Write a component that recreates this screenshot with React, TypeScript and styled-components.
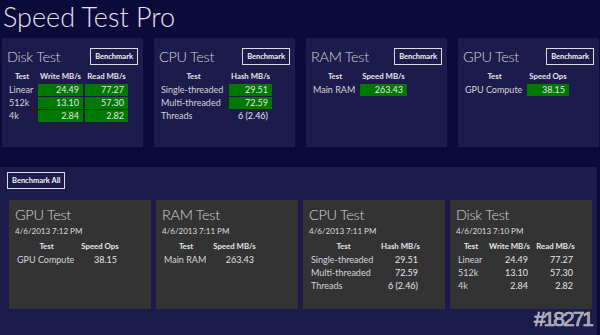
import React from 'react'
import styled, { createGlobalStyle } from 'styled-components'

type Row = { label: string; values: string[] }
type Test = {
	name: string
	columns: string[]
	widths: number[]
	rows: Row[]
	date?: string
	highlight?: number
}

const disk: Test = {
	name: 'Disk Test',
	columns: ['Write MB/s', 'Read MB/s'],
	widths: [28, 45, 43],
	rows: [
		{ label: 'Linear', values: ['24.49', '77.27'] },
		{ label: '512k', values: ['13.10', '57.30'] },
		{ label: '4k', values: ['2.84', '2.82'] },
	],
	highlight: 3,
}

const cpu: Test = {
	name: 'CPU Test',
	columns: ['Hash MB/s'],
	widths: [67, 43],
	rows: [
		{ label: 'Single-threaded', values: ['29.51'] },
		{ label: 'Multi-threaded', values: ['72.59'] },
		{ label: 'Threads', values: ['6 (2.46)'] },
	],
	highlight: 2,
}

const ram: Test = {
	name: 'RAM Test',
	columns: ['Speed MB/s'],
	widths: [46, 47],
	rows: [{ label: 'Main RAM', values: ['263.43'] }],
	highlight: 1,
}

const gpu: Test = {
	name: 'GPU Test',
	columns: ['Speed Ops'],
	widths: [61, 42],
	rows: [{ label: 'GPU Compute', values: ['38.15'] }],
	highlight: 1,
}

const history: Test[] = [
	{ ...gpu, date: '4/6/2013 7:12 PM' },
	{ ...ram, date: '4/6/2013 7:11 PM' },
	{ ...cpu, date: '4/6/2013 7:11 PM' },
	{ ...disk, date: '4/6/2013 7:10 PM' },
]

export default function App() {
	return (
		<Page>
			<GlobalStyle />
			<Title>Speed Test Pro</Title>

			<TopGrid>
				{[disk, cpu, ram, gpu].map((test) => (
					<Card key={test.name}>
						<CardHead>
							<CardTitle>{test.name}</CardTitle>
							<OutlineButton>Benchmark</OutlineButton>
						</CardHead>
						<ResultTable test={test} live />
					</Card>
				))}
			</TopGrid>

			<HistoryPanel>
				<OutlineButton>Benchmark All</OutlineButton>
				<HistoryGrid>
					{history.map((test) => (
						<HistoryCard key={test.name}>
							<CardTitle>{test.name}</CardTitle>
							<DateLine>{test.date}</DateLine>
							<ResultTable test={test} />
						</HistoryCard>
					))}
				</HistoryGrid>
			</HistoryPanel>

			<Watermark>#18271</Watermark>
		</Page>
	)
}

function ResultTable({ test, live }: { test: Test; live?: boolean }) {
	return (
		<Table>
			<colgroup>
				{test.widths.map((w, i) => (
					<col key={i} style={{ width: w }} />
				))}
			</colgroup>
			<thead>
				<tr>
					<th>Test</th>
					{test.columns.map((c) => (
						<th key={c}>{c}</th>
					))}
				</tr>
			</thead>
			<tbody>
				{test.rows.map((row, i) => (
					<tr key={row.label}>
						<Label>{row.label}</Label>
						{row.values.map((v, j) => (
							<Value key={j} $green={live && i < (test.highlight ?? 0)}>
								{v}
							</Value>
						))}
					</tr>
				))}
			</tbody>
		</Table>
	)
}

const GlobalStyle = createGlobalStyle`
	html, body {
		margin: 0;
		padding: 0;
		background: #0b0a3b;
	}
	body {
		font-family: Lato, 'Open Sans', sans-serif;
		color: #e6e6ec;
	}
`

const Page = styled.div`
	position: relative;
	width: 600px;
	height: 335px;
	overflow: hidden;
	background: #0b0a3b;
`

const Title = styled.h1`
	margin: 0;
	padding: 0 0 0 3px;
	height: 38px;
	font-size: 27px;
	font-weight: 300;
	line-height: 33px;
	color: #e4e4ee;
`

const TopGrid = styled.div`
	display: grid;
	grid-template-columns: repeat(4, 141px);
	gap: 11px;
	padding-left: 2px;
`

const Card = styled.div`
	height: 109px;
	background: #1c1b4b;
	padding: 10px 5px 0 5px;
	box-sizing: border-box;
`

const CardHead = styled.div`
	display: flex;
	justify-content: space-between;
	align-items: center;
	height: 17px;
	margin-bottom: 6px;
`

const CardTitle = styled.div`
	font-size: 14.5px;
	font-weight: 300;
	line-height: 20px;
	letter-spacing: -0.3px;
	color: #d4d4de;
`

const OutlineButton = styled.button`
	display: block;
	font-family: Lato, 'Open Sans', sans-serif;
	font-size: 7.5px;
	font-weight: 700;
	color: #f4f4f8;
	background: transparent;
	border: 1.5px solid #dcdce4;
	padding: 0 4px;
	height: 17px;
	line-height: 13px;
	cursor: pointer;
`

const Table = styled.table`
	table-layout: fixed;
	border-collapse: separate;
	border-spacing: 2px 1.5px;
	margin: -1px 0 0 -1px;
	font-size: 9px;

	th {
		font-size: 7.8px;
		font-weight: 700;
		text-align: center;
		padding: 0;
		height: 11.5px;
		line-height: 11px;
		white-space: nowrap;
	}
	td {
		height: 12px;
		line-height: 12px;
		padding-top: 0;
		padding-bottom: 0;
		white-space: nowrap;
	}
`

const Label = styled.td`
	text-align: left;
	padding: 0 0 0 1px;
	color: #d4d4dc;
`

const Value = styled.td<{ $green?: boolean }>`
	text-align: right;
	padding: 0 4px 0 0;
	background: ${(p) => (p.$green ? '#007800' : 'transparent')};
	color: #e4e4ea;
`

const HistoryPanel = styled.div`
	display: flex;
	flex-direction: column;
	align-items: flex-start;
	margin-top: 20px;
	width: 597px;
	height: 170px;
	background: #1c1b4b;
	padding: 5px 0 0 7px;
	box-sizing: border-box;
`

const HistoryGrid = styled.div`
	display: grid;
	grid-template-columns: repeat(4, 142px);
	gap: 5px;
	margin-top: 11px;
	margin-left: 2px;
`

const HistoryCard = styled.div`
	height: 109px;
	background: #333333;
	padding: 5px 5px 0 6px;
	box-sizing: border-box;
`

const DateLine = styled.div`
	font-size: 8px;
	line-height: 12px;
	margin: 0 0 4px;
	color: #dcdcdc;
`

const Watermark = styled.div`
	position: absolute;
	right: 8px;
	bottom: 4px;
	font-family: 'Liberation Sans', sans-serif;
	font-size: 21px;
	letter-spacing: -2px;
	color: #9a9aa6;
	-webkit-text-stroke: 0.6px #c8c8d0;
	text-shadow: 0 0 1px #303040;
`
